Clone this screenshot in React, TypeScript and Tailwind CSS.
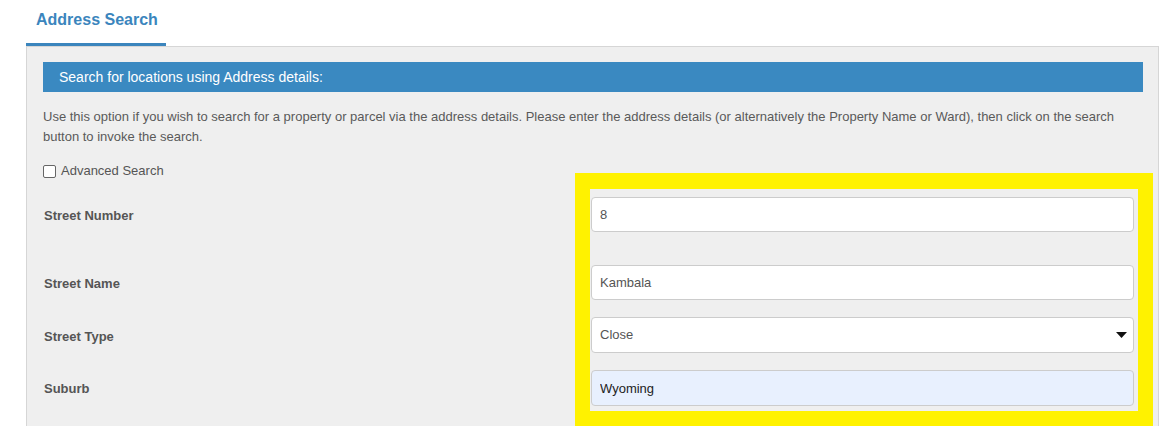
import { useState } from "react";

const fields = [
  { label: "Street Number", value: "8", gap: "mt-0" },
  { label: "Street Name", value: "Kambala", gap: "mt-[33px]" },
];

export default function App() {
  const [advanced, setAdvanced] = useState(false);

  return (
    <div className="min-h-screen bg-white font-['Liberation_Sans',Arial,sans-serif] text-[#555]">
      {/* tabs */}
      <div className="flex pl-[26px]">
        <div className="w-[140px] border-b-[3px] border-[#3b85bd] pl-[10px] pt-[10px] pb-[13px] text-[16px] font-bold leading-[20px] text-[#3b85bd]">
          Address Search
        </div>
      </div>

      <div className="ml-[26px] mr-[7px] border border-[#d6d6d6] bg-[#efefef] pb-10 pl-[16px] pr-[15px] pt-[15px]">
        <div className="flex h-[30px] items-center bg-[#3a89c1] pl-[16px] text-[14px] text-white">
          Search for locations using Address details:
        </div>

        <p className="mt-[15px] text-[13px] leading-[20px] text-[#5a5a5a]">
          Use this option if you wish to search for a property or parcel via the address details. Please enter the
          address details (or alternatively the Property Name or Ward), then click on the search button to invoke the
          search.
        </p>

        <div className="mr-[-10px] mt-[13px] flex">
          {/* labels */}
          <div className="flex w-[532px] flex-col">
            <label className="flex h-[22px] items-center gap-[5px] text-[13px] text-[#555]">
              <input
                type="checkbox"
                checked={advanced}
                onChange={(e) => setAdvanced(e.target.checked)}
                className="h-[13px] w-[13px] appearance-none rounded-[2px] border border-[#666] bg-white"
              />
              Advanced Search
            </label>
            <div className="mt-[15px] flex h-[35px] items-center pl-px pt-[2px] text-[13px] font-bold text-[#555]">
              Street Number
            </div>
            <div className="mt-[33px] flex h-[35px] items-center pl-px pt-[2px] text-[13px] font-bold text-[#555]">
              Street Name
            </div>
            <div className="mt-[17px] flex h-[36px] items-center pl-px pt-[3px] text-[13px] font-bold text-[#555]">
              Street Type
            </div>
            <div className="mt-[17px] flex h-[36px] items-center pl-px pt-[2px] text-[13px] font-bold text-[#555]">
              Suburb
            </div>
          </div>

          {/* highlighted inputs */}
          <div className="mt-[13px] flex-1">
            <div className="border-x-[15px] border-t-[16px] border-b-[16px] border-x-[#fff200] border-y-[#fff200] bg-[#efefef] pb-[5px] pl-px pr-[4px] pt-[8px]">
              {fields.map((f) => (
                <input
                  key={f.label}
                  defaultValue={f.value}
                  className={`${f.gap} block h-[35px] w-full rounded-[4px] border border-[#ccc] bg-white px-[8px] text-[13px] text-[#555] outline-none`}
                />
              ))}
              <div className="relative mt-[17px]">
                <select
                  defaultValue="Close"
                  className="block h-[36px] w-full appearance-none rounded-[4px] border border-[#ccc] bg-white px-[8px] text-[13px] text-[#555] outline-none"
                >
                  <option>Close</option>
                  <option>Street</option>
                  <option>Road</option>
                  <option>Avenue</option>
                </select>
                <svg
                  className="pointer-events-none absolute right-[7px] top-[15px]"
                  width="11"
                  height="6"
                  viewBox="0 0 11 6"
                >
                  <path d="M0 0h11L5.5 6z" fill="#111" />
                </svg>
              </div>
              <input
                defaultValue="Wyoming"
                className="mt-[17px] block h-[36px] w-full rounded-[4px] border border-[#ccc] bg-[#e8f0fe] px-[8px] text-[13px] text-[#222] outline-none"
              />
            </div>
          </div>
        </div>
      </div>
    </div>
  );
}
